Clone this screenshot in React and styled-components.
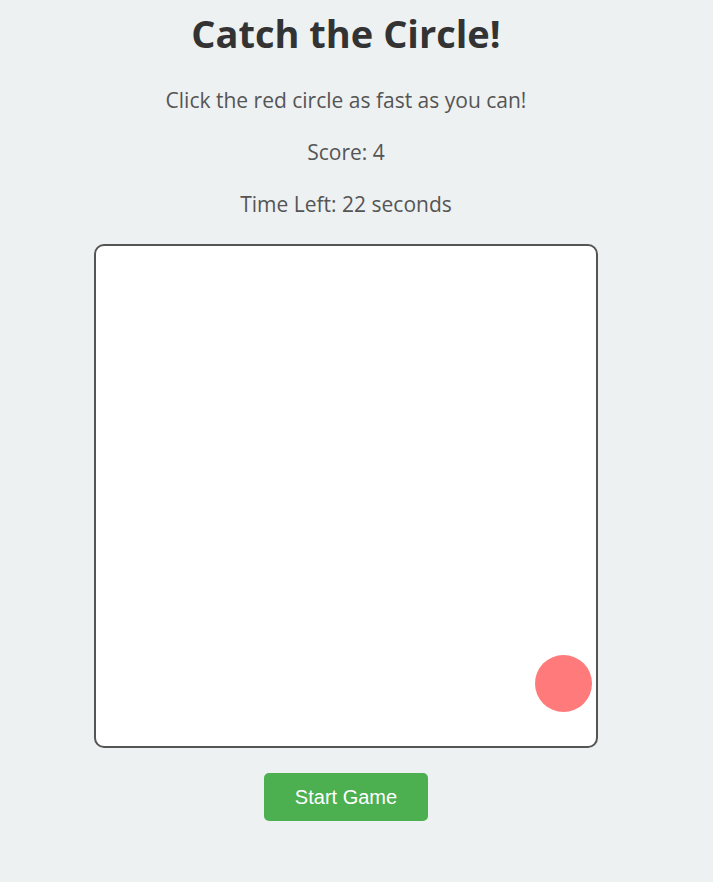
import styled, { createGlobalStyle } from "styled-components";

const GlobalStyle = createGlobalStyle`
  html, body {
    margin: 0;
    padding: 0;
    background-color: #edf1f2;
  }
  body {
    font-family: "Open Sans", "Noto Sans", sans-serif;
  }
`;

const App = () => {
  return (
    <Page>
      <GlobalStyle />
      <Title>Catch the Circle!</Title>
      <Intro>Click the red circle as fast as you can!</Intro>
      <Info>Score: 4</Info>
      <Info>Time Left: 22 seconds</Info>
      <Board>
        <Target style={{ left: 439, top: 409 }} />
      </Board>
      <Start_btn>Start Game</Start_btn>
    </Page>
  );
};

const Page = styled.div`
  width: 692px;
  display: flex;
  flex-direction: column;
  align-items: center;
  padding-top: 10px;
`;

const Title = styled.h1`
  margin: 0;
  font-size: 38px;
  line-height: 46px;
  font-weight: 700;
  color: #333333;
`;

const Intro = styled.p`
  margin: 30px 0 0;
  font-size: 21px;
  line-height: 28px;
  color: #555555;
`;

const Info = styled.p`
  margin: 24px 0 0;
  font-size: 21px;
  line-height: 28px;
  color: #555555;
`;

const Board = styled.div`
  position: relative;
  width: 500px;
  height: 500px;
  margin-top: 26px;
  background-color: #ffffff;
  border: 2px solid #555555;
  border-radius: 10px;
`;

const Target = styled.div`
  position: absolute;
  width: 57px;
  height: 57px;
  border-radius: 50%;
  background-color: #ff7b7b;
  cursor: pointer;
`;

const Start_btn = styled.button`
  width: 164px;
  height: 48px;
  margin-top: 25px;
  border: none;
  border-radius: 5px;
  background-color: #4caf50;
  color: #ffffff;
  font-family: "Liberation Sans", Arial, sans-serif;
  font-size: 20px;
  cursor: pointer;
`;

export default App;
